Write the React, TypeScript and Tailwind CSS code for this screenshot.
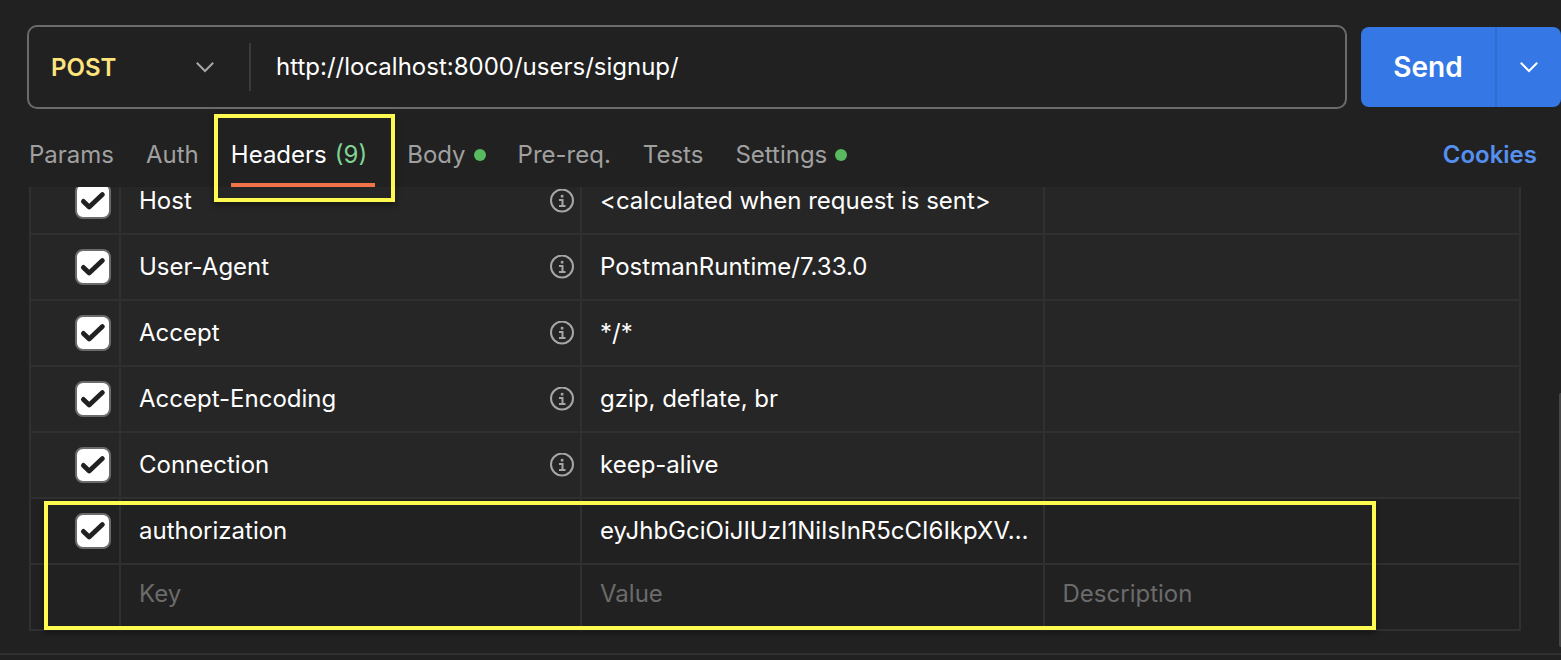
import React, { useState } from "react";

const initialHeaders = [
  { key: "Host", value: "<calculated when request is sent>", auto: true },
  { key: "User-Agent", value: "PostmanRuntime/7.33.0", auto: true },
  { key: "Accept", value: "*/*", auto: true },
  { key: "Accept-Encoding", value: "gzip, deflate, br", auto: true },
  { key: "Connection", value: "keep-alive", auto: true },
  {
    key: "authorization",
    value: "eyJhbGciOiJIUzI1NiIsInR5cCI6IkpXV…",
    auto: false,
  },
];

const tabs = [
  { name: "Params" },
  { name: "Auth" },
  { name: "Headers", count: 9 },
  { name: "Body", dot: true },
  { name: "Pre-req." },
  { name: "Tests" },
  { name: "Settings", dot: true },
];

const Chevron = ({ className }: { className: string }) => (
  <svg
    viewBox="0 0 20 12"
    className={className}
    fill="none"
    stroke="currentColor"
    strokeWidth="2"
    aria-hidden="true"
  >
    <path d="M1.8 1.8 L10 10 L18.2 1.8" />
  </svg>
);

const InfoIcon = () => (
  <svg
    viewBox="0 0 24 24"
    className="size-6 shrink-0 text-[#a6a6a6]"
    fill="none"
    stroke="currentColor"
    strokeWidth="2"
    aria-hidden="true"
  >
    <circle cx="12" cy="11.5" r="11" />
    <path d="M9 11 H12.5 V17 M9 17 H15.5" />
    <path d="M10.8 7.2 H13.4" strokeWidth="2.6" />
  </svg>
);

const HeaderCheckbox = ({ name, checked, onChange }) => (
  <label className="ml-auto grid size-9">
    <input
      type="checkbox"
      aria-label={`Enable ${name}`}
      checked={checked}
      onChange={onChange}
      className="col-start-1 row-start-1 size-9 appearance-none rounded-lg border-2 border-[#6b6b6b] checked:bg-white"
    />
    {checked && (
      <svg
        viewBox="0 0 36 36"
        className="pointer-events-none col-start-1 row-start-1 size-9"
        fill="none"
        stroke="#212121"
        strokeWidth="4.8"
        strokeLinecap="round"
        strokeLinejoin="round"
        aria-hidden="true"
      >
        <path d="M8.4 18.4 L14.2 24 L27.4 11.6" />
      </svg>
    )}
  </label>
);

const cell = "h-[66px] border-r-2 border-b-2 border-[#303030] p-0";

const App = () => {
  const [method, setMethod] = useState("POST");
  const [url, setUrl] = useState("http://localhost:8000/users/signup/");
  const [activeTab, setActiveTab] = useState("Headers");
  const [disabled, setDisabled] = useState<string[]>([]);

  const toggleHeader = (key: string) => {
    setDisabled(
      disabled.includes(key)
        ? disabled.filter((k) => k !== key)
        : [...disabled, key]
    );
  };

  return (
    <div className="min-h-screen bg-[#212121] pt-[25px] font-['Inter',sans-serif] text-2xl text-white">
      {/* request line */}
      <div className="flex items-center gap-[14px] pl-[27px]">
        <div className="flex h-[84px] min-w-0 flex-1 items-center rounded-[10px] border-2 border-[#6b6b6b]">
          <div className="relative flex h-12 w-[222px] shrink-0 items-center border-r-2 border-[#3a3a3a]">
            <select
              aria-label="Method"
              value={method}
              onChange={(e) => setMethod(e.target.value)}
              className="h-12 w-full appearance-none bg-transparent pt-0.5 pl-[22px] font-semibold text-[#ffe47e] outline-none"
            >
              <option>POST</option>
              <option>GET</option>
              <option>PUT</option>
              <option>DELETE</option>
            </select>
            <Chevron className="pointer-events-none absolute right-[34px] h-3 w-5 text-[#a6a6a6]" />
          </div>
          <input
            type="text"
            aria-label="Request URL"
            value={url}
            onChange={(e) => setUrl(e.target.value)}
            className="h-12 min-w-0 flex-1 bg-transparent px-[25px] pb-0.5 outline-none"
          />
        </div>
        <div className="flex h-20 w-[200px] shrink-0 overflow-hidden rounded-lg bg-[#3578e5]">
          <button
            type="button"
            className="flex-1 border-r-2 border-[#306dd0] pt-0.5 text-[28px] font-semibold"
          >
            Send
          </button>
          <button
            type="button"
            aria-label="Send options"
            className="flex w-16 items-center justify-center"
          >
            <Chevron className="h-3 w-5" />
          </button>
        </div>
      </div>

      {/* tabs */}
      <div className="flex items-start justify-between pt-[30px] pr-6 pl-[29px]">
        <div className="flex gap-8">
          {tabs.map((tab) => (
            <div key={tab.name} className="relative">
              <button
                type="button"
                onClick={() => setActiveTab(tab.name)}
                className={
                  activeTab === tab.name
                    ? "flex items-center gap-2 border-b-4 border-[#f0734a] pb-3 text-white"
                    : "flex items-center gap-2 border-b-4 border-transparent pb-3 text-[#a0a0a0]"
                }
              >
                {tab.name}
                {tab.count && (
                  <span className="pr-2 text-[#7fd494]">({tab.count})</span>
                )}
                {tab.dot && (
                  <span className="size-3 rounded-full bg-[#58b95f]" />
                )}
              </button>
              {tab.name === "Headers" && (
                <div className="pointer-events-none absolute -top-[25px] -right-5 -bottom-[15px] -left-[17px] z-10 border-4 border-[#fffa50] shadow-[0_3px_6px_rgba(0,0,0,0.4)]" />
              )}
            </div>
          ))}
        </div>
        <a href="#cookies" className="font-semibold text-[#5590f0]">
          Cookies
        </a>
      </div>

      {/* headers list, scrolled down a bit */}
      <div className="relative overflow-hidden border-b-2 border-[#303030] pr-10 pb-[22px] pl-[29px]">
        <table className="-mt-[18px] w-full table-fixed border-separate border-spacing-0">
          <colgroup>
            <col className="w-[92px]" />
            <col className="w-[30.9%]" />
            <col className="w-[31%]" />
            <col />
          </colgroup>
          <tbody>
            {initialHeaders.map((header) => (
              <tr
                key={header.key}
                className={header.auto ? "bg-[#262626]" : ""}
              >
                <td className={`${cell} border-l-2`}>
                  <div className="flex pr-2">
                    <HeaderCheckbox
                      name={header.key}
                      checked={!disabled.includes(header.key)}
                      onChange={() => toggleHeader(header.key)}
                    />
                  </div>
                </td>
                <td className={cell}>
                  <div className="flex items-center justify-between pr-1.5 pl-[18px]">
                    {header.key}
                    {header.auto && <InfoIcon />}
                  </div>
                </td>
                <td className={cell}>
                  <div className="truncate pr-2 pl-[18px]">{header.value}</div>
                </td>
                <td className={cell}></td>
              </tr>
            ))}
            <tr>
              <td className={`${cell} border-l-2`}></td>
              {["Key", "Value", "Description"].map((field) => (
                <td key={field} className={cell}>
                  <input
                    type="text"
                    aria-label={field}
                    placeholder={field}
                    className="block w-full bg-transparent pr-4 pb-1.5 pl-[18px] outline-none placeholder:text-[#6b6b6b]"
                  />
                </td>
              ))}
            </tr>
          </tbody>
        </table>
        <div className="pointer-events-none absolute right-[185px] bottom-[23px] left-11 h-[129px] border-4 border-[#fffa50] shadow-[0_3px_6px_rgba(0,0,0,0.4)]" />
        {/* scrollbar thumb */}
        <div className="absolute right-0 bottom-1.5 h-[254px] w-0.5 rounded-l bg-[#454545]" />
      </div>
    </div>
  );
};

export default App;
